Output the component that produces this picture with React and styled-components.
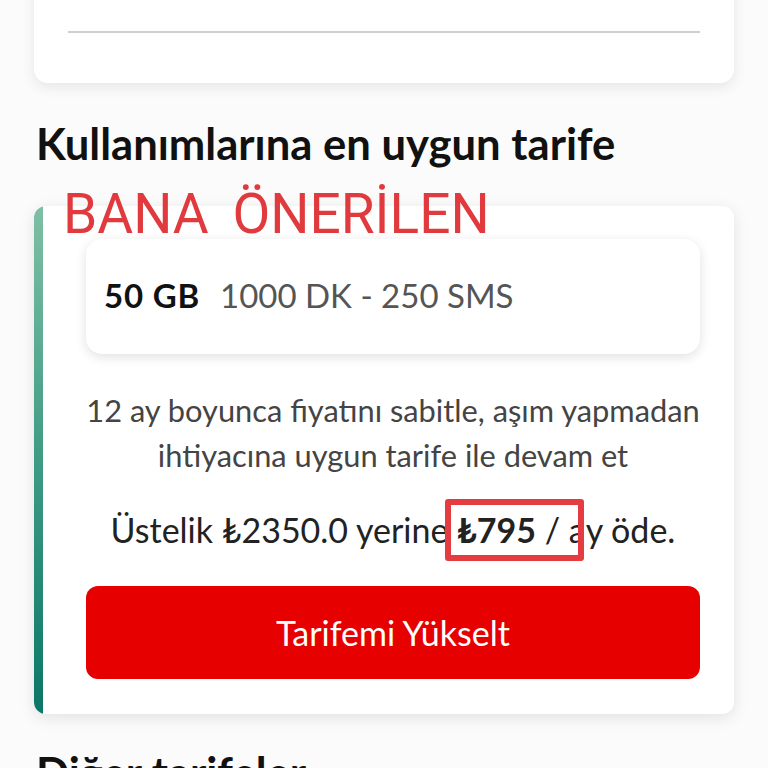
import styled, { createGlobalStyle } from 'styled-components'

const GlobalStyle = createGlobalStyle`
  html, body {
    margin: 0;
    padding: 0;
    background: #fbfbfb;
    font-family: Lato, "Noto Sans", sans-serif;
    color: #1a1a1a;
  }
`

const Page = styled.div`
  width: 768px;
  height: 768px;
  overflow: hidden;
  display: flex;
  flex-direction: column;
  & > * {
    flex-shrink: 0;
  }
`

const TopCard = styled.div`
  margin: -60px 34px 0 34px;
  height: 143px;
  background: #fff;
  border-radius: 0 0 14px 14px;
  box-shadow: 0 4px 14px rgba(0, 0, 0, 0.09);
  padding: 0 34px;
  display: flex;
  flex-direction: column;
  box-sizing: border-box;
`

const TopRow = styled.div`
  display: flex;
  justify-content: space-between;
  align-items: baseline;
  height: 76px;
  box-sizing: border-box;
  padding-top: 10px;
  font-size: 33px;
`

const TopBold = styled.span`
  font-weight: 700;
`

const TopGray = styled.span`
  color: #666;
`

const Divider = styled.div`
  height: 2px;
  background: #cfcfcf;
  margin-top: 15px;
`

const Heading = styled.h2`
  margin: 35px 0 0 36px;
  font-size: 43.6px;
  font-weight: 700;
  line-height: 50px;
  color: #111;
`

const Annotation = styled.div`
  margin: 18px 0 0 63px;
  font-family: Roboto, "Noto Sans", sans-serif;
  font-size: 55px;
  line-height: 56px;
  color: #e03a3e;
  position: relative;
  z-index: 2;
  height: 0;
  word-spacing: 10px;
`

const OfferCard = styled.div`
  margin: 20px 34px 0 34px;
  height: 508px;
  background: #fff;
  border-radius: 12px;
  box-shadow: 0 4px 16px rgba(0, 0, 0, 0.1);
  display: flex;
  overflow: hidden;
`

const Accent = styled.div`
  width: 9px;
  flex-shrink: 0;
  background: linear-gradient(180deg, #7fbfa5 0%, #3f9b84 50%, #0b7767 100%);
`

const OfferBody = styled.div`
  flex: 1;
  padding: 33px 34px 0 43px;
  display: flex;
  flex-direction: column;
  align-items: stretch;
`

const PlanBox = styled.div`
  height: 115px;
  flex-shrink: 0;
  border-radius: 16px;
  background: #fff;
  box-shadow: 0 3px 12px rgba(0, 0, 0, 0.12);
  display: flex;
  align-items: center;
  padding: 0 18px 4px;
  box-sizing: border-box;
  font-size: 33px;
  gap: 20px;
`

const PlanGb = styled.span`
  font-weight: 700;
  color: #111;
  letter-spacing: 0.8px;
`

const PlanInfo = styled.span`
  color: #555;
`

const Description = styled.p`
  margin: 34px -10px 0;
  text-align: center;
  font-size: 30.8px;
  line-height: 45px;
  color: #444;
  white-space: nowrap;
`

const PriceLine = styled.p`
  margin: 32px 0 0;
  text-align: center;
  font-size: 34px;
  line-height: 40px;
  color: #222;
`

const Marked = styled.span`
  position: relative;
`

const New = styled.b`
  font-weight: 700;
`

const MarkBox = styled.span`
  position: absolute;
  left: -12px;
  right: 2px;
  top: -10px;
  bottom: -11px;
  border: 6px solid #e53c41;
  border-radius: 3px;
`

const UpgradeButton = styled.button`
  margin-top: 36px;
  height: 93px;
  flex-shrink: 0;
  border: none;
  border-radius: 12px;
  background: #e60000;
  color: #fff;
  font-family: Lato, "Noto Sans", sans-serif;
  font-size: 34px;
`

const SubHeading = styled.h2`
  margin: 33px 0 0 36px;
  font-size: 43.6px;
  font-weight: 700;
  line-height: 50px;
  color: #111;
`

export default function App() {
  return (
    <Page>
      <GlobalStyle />
      <TopCard>
        <TopRow>
          <TopBold>50 GB</TopBold>
          <TopGray>5000 DK - 250 ADET</TopGray>
        </TopRow>
        <Divider />
      </TopCard>

      <Heading>Kullanımlarına en uygun tarife</Heading>
      <Annotation>BANA ÖNERİLEN</Annotation>

      <OfferCard>
        <Accent />
        <OfferBody>
          <PlanBox>
            <PlanGb>50 GB</PlanGb>
            <PlanInfo>1000 DK - 250 SMS</PlanInfo>
          </PlanBox>
          <Description>
            12 ay boyunca fiyatını sabitle, aşım yapmadan
            <br />
            ihtiyacına uygun tarife ile devam et
          </Description>
          <PriceLine>
            Üstelik ₺2350.0 yerine <Marked><New>₺795</New> / a<MarkBox /></Marked>y öde.
          </PriceLine>
          <UpgradeButton>Tarifemi Yükselt</UpgradeButton>
        </OfferBody>
      </OfferCard>

      <SubHeading>Diğer tarifeler</SubHeading>
    </Page>
  )
}
